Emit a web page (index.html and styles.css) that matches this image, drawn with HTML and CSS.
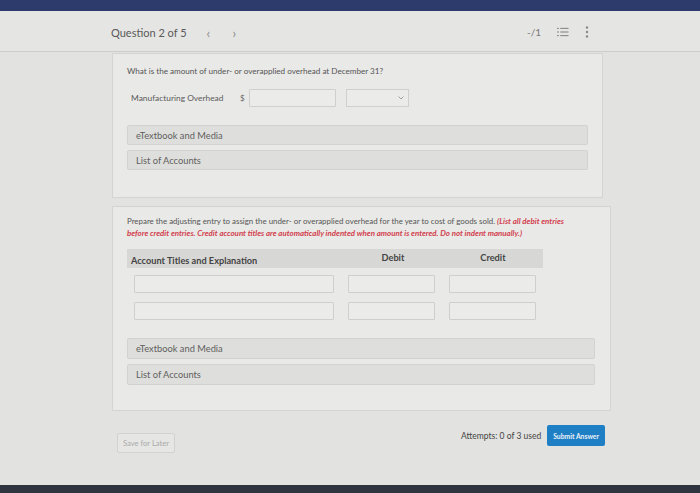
FILE: index.html
```html
<!DOCTYPE html>
<html lang="en">
<head>
  <meta charset="UTF-8">
  <title>Question 2 of 5</title>
  <link rel="stylesheet" href="styles.css">
</head>
<body>
  <div class="topbar"></div>

  <header class="qbar">
    <div class="qnav">
      <span class="qtitle">Question 2 of 5</span>
      <span class="arrow">&lsaquo;</span>
      <span class="arrow">&rsaquo;</span>
    </div>
    <div class="qtools">
      <span class="score">-/1</span>
      <svg class="icon" width="12" height="10" viewBox="0 0 13 10">
        <g fill="#8a8a8a">
          <rect x="0" y="0.5" width="2" height="1.2"/>
          <rect x="3.5" y="0.5" width="9" height="1.2"/>
          <rect x="0" y="4.4" width="2" height="1.2"/>
          <rect x="3.5" y="4.4" width="9" height="1.2"/>
          <rect x="0" y="8.3" width="2" height="1.2"/>
          <rect x="3.5" y="8.3" width="9" height="1.2"/>
        </g>
      </svg>
      <svg class="icon" width="4" height="12" viewBox="0 0 4 12">
        <g fill="#8a8a8a">
          <circle cx="2" cy="1.5" r="1.2"/>
          <circle cx="2" cy="6" r="1.2"/>
          <circle cx="2" cy="10.5" r="1.2"/>
        </g>
      </svg>
    </div>
  </header>

  <main class="content">
    <section class="card card-one">
      <p class="prompt">What is the amount of under- or overapplied overhead at December 31?</p>

      <div class="field-row">
        <span class="field-label">Manufacturing Overhead</span>
        <span class="dollar">$</span>
        <input type="text" class="amount">
        <div class="select-box">
          <svg width="6" height="4" viewBox="0 0 6 4"><path d="M0.5 0.5 L3 3 L5.5 0.5" fill="none" stroke="#999" stroke-width="0.9"/></svg>
        </div>
      </div>

      <div class="panels">
        <div class="panel">eTextbook and Media</div>
        <div class="panel">List of Accounts</div>
      </div>
    </section>

    <section class="card card-two">
      <p class="prompt prompt-long">Prepare the adjusting entry to assign the under- or overapplied overhead for the year to cost of goods sold. <em class="note">(List all debit entries before credit entries. Credit account titles are automatically indented when amount is entered. Do not indent manually.)</em></p>

      <div class="journal">
        <div class="journal-head">
          <span class="col-title">Account Titles and Explanation</span>
          <span class="col-amt">Debit</span>
          <span class="col-amt">Credit</span>
        </div>
        <div class="journal-row">
          <input type="text" class="in-title">
          <input type="text" class="in-amt">
          <input type="text" class="in-amt">
        </div>
        <div class="journal-row">
          <input type="text" class="in-title">
          <input type="text" class="in-amt">
          <input type="text" class="in-amt">
        </div>
      </div>

      <div class="panels panels-wide">
        <div class="panel">eTextbook and Media</div>
        <div class="panel">List of Accounts</div>
      </div>
    </section>

    <div class="actions">
      <button class="btn-save">Save for Later</button>
      <div class="submit-group">
        <span class="attempts">Attempts: 0 of 3 used</span>
        <button class="btn-submit">Submit Answer</button>
      </div>
    </div>
  </main>

  <div class="bottombar"></div>
</body>
</html>
```

FILE: styles.css
```css
body {
  margin: 0;
  padding: 0;
  width: 700px;
  height: 493px;
  overflow: hidden;
  font-family: 'Lato', 'Open Sans', sans-serif;
  background-color: #e2e2e0;
  color: #4a4a4a;
  display: flex;
  flex-direction: column;
}

.topbar {
  height: 11px;
  background-color: #2c3b6b;
  flex-shrink: 0;
}

.qbar {
  height: 40px;
  display: flex;
  justify-content: space-between;
  align-items: center;
  padding: 0 111px 0 111px;
  background-color: #e5e5e3;
  border-bottom: 1px solid #cdcdcb;
  flex-shrink: 0;
}

.qnav {
  display: flex;
  align-items: center;
  margin-top: 3px;
}

.qtitle {
  font-size: 11px;
  color: #5a5a5a;
  margin-right: 20px;
}

.arrow {
  font-size: 13px;
  color: #8a8a8a;
  width: 26px;
}

.qtools {
  display: flex;
  align-items: center;
  gap: 16px;
  margin-top: 2px;
}

.score {
  font-size: 10px;
  color: #7a7a7a;
}

.icon {
  display: block;
}

.content {
  flex: 1;
  padding: 1px 0 0 112px;
}

.card {
  background-color: #e9e9e7;
  border: 1px solid #d4d4d2;
  box-sizing: border-box;
}

.card-one {
  width: 491px;
  height: 145px;
  padding: 11px 0 0 14px;
}

.card-two {
  width: 499px;
  height: 205px;
  margin-top: 8px;
  padding: 8px 0 0 14px;
}

.prompt {
  margin: 0;
  font-size: 8.1px;
  line-height: 12px;
  color: #555;
}

.prompt-long {
  width: 458px;
  font-size: 7.9px;
}

.note {
  color: #d2404e;
  font-weight: 700;
}

.field-row {
  display: flex;
  align-items: center;
  margin: 12px 0 0 4px;
  height: 18px;
}

.field-label {
  font-size: 8.4px;
  color: #5a5a5a;
  width: 109px;
}

.dollar {
  font-size: 8px;
  color: #6a6a6a;
  width: 9px;
}

input {
  font-family: inherit;
  border: 1px solid #cfcfcd;
  background-color: #ebebe9;
  box-sizing: border-box;
  padding: 0;
  margin: 0;
  border-radius: 1px;
}

.amount {
  width: 87px;
  height: 18px;
}

.select-box {
  width: 63px;
  height: 18px;
  margin-left: 10px;
  border: 1px solid #cfcfcd;
  background-color: #ebebe9;
  box-sizing: border-box;
  display: flex;
  align-items: center;
  justify-content: flex-end;
  padding-right: 4px;
}

.panels {
  display: flex;
  flex-direction: column;
  gap: 5px;
  width: 461px;
  margin-top: 18px;
}

.panels-wide {
  width: 468px;
  margin-top: 18px;
}

.panel {
  height: 20px;
  display: flex;
  align-items: center;
  padding-left: 8px;
  font-size: 9.3px;
  color: #5e5e5e;
  background-color: #dededc;
  border: 1px solid #d2d2d0;
  border-radius: 2px;
  box-sizing: border-box;
}

.panels-wide .panel {
  height: 21px;
}

.journal {
  margin-top: 10px;
  width: 416px;
}

.journal-head {
  display: flex;
  align-items: center;
  height: 19px;
  background-color: #d7d7d5;
  font-size: 9.2px;
  font-weight: 700;
  color: #444;
}

.col-title {
  width: 214px;
  padding-left: 4px;
  padding-top: 4px;
}

.col-amt {
  width: 101px;
  text-align: center;
  padding-bottom: 2px;
}

.journal-row {
  display: flex;
  gap: 14px;
  padding-left: 7px;
  margin-top: 7px;
}

.journal-row + .journal-row {
  margin-top: 9px;
}

.in-title {
  width: 200px;
  height: 18px;
}

.in-amt {
  width: 87px;
  height: 18px;
}

.actions {
  display: flex;
  justify-content: space-between;
  align-items: flex-start;
  width: 493px;
  margin-top: 14px;
}

.btn-save {
  margin: 8px 0 0 5px;
  height: 20px;
  padding: 0 5px;
  font-family: inherit;
  font-size: 7.6px;
  color: #aaa;
  background-color: #e6e6e4;
  border: 1px solid #d2d2d0;
  border-radius: 2px;
}

.submit-group {
  display: flex;
  align-items: center;
  gap: 6px;
}

.attempts {
  font-size: 8.5px;
  color: #444;
}

.btn-submit {
  height: 21px;
  padding: 0 6px;
  font-family: inherit;
  font-size: 6.8px;
  font-weight: 700;
  color: #eaf2fa;
  background-color: #1f7fc4;
  border: none;
  border-radius: 2px;
}

.bottombar {
  height: 8px;
  background-color: #2f3540;
  flex-shrink: 0;
}
```
